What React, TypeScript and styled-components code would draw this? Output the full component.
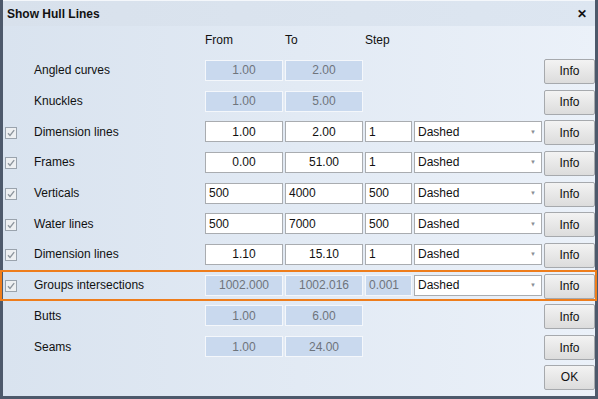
import * as React from 'react'
import styled, { createGlobalStyle } from 'styled-components'

type Align = 'left' | 'center'

interface LineRow {
    label: string
    checked?: boolean
    from: string
    to: string
    step?: string
    enabled?: boolean
    align?: Align
    style?: boolean
    highlighted?: boolean
}

const rows: LineRow[] = [
    { label: 'Angled curves', from: '1.00', to: '2.00', align: 'center' },
    { label: 'Knuckles', from: '1.00', to: '5.00', align: 'center' },
    { label: 'Dimension lines', checked: true, from: '1.00', to: '2.00', step: '1', enabled: true, align: 'center', style: true },
    { label: 'Frames', checked: true, from: '0.00', to: '51.00', step: '1', enabled: true, align: 'center', style: true },
    { label: 'Verticals', checked: true, from: '500', to: '4000', step: '500', enabled: true, align: 'left', style: true },
    { label: 'Water lines', checked: true, from: '500', to: '7000', step: '500', enabled: true, align: 'left', style: true },
    { label: 'Dimension lines', checked: true, from: '1.10', to: '15.10', step: '1', enabled: true, align: 'center', style: true },
    { label: 'Groups intersections', checked: true, from: '1002.000', to: '1002.016', step: '0.001', align: 'center', style: true, highlighted: true },
    { label: 'Butts', from: '1.00', to: '6.00', align: 'center' },
    { label: 'Seams', from: '1.00', to: '24.00', align: 'center' },
]

const CheckIcon = () => (
    <svg width="12" height="12" viewBox="0 0 12 12">
        <rect x="0.5" y="0.5" width="11" height="11" fill="#eef0f2" stroke="#9aa3ad" />
        <path d="M3 6.2 L5 8.5 L9.2 3.2" fill="none" stroke="#8c949c" strokeWidth="1.3" />
    </svg>
)

export default function App() {
    return (
        <>
            <GlobalStyle />
            <WindowStyled>
                <TitleBarStyled>
                    <TitleStyled>Show Hull Lines</TitleStyled>
                    <CloseStyled>✕</CloseStyled>
                </TitleBarStyled>
                <BodyStyled>
                    <HeaderRowStyled>
                        <span />
                        <span />
                        <HeaderCellStyled>From</HeaderCellStyled>
                        <HeaderCellStyled>To</HeaderCellStyled>
                        <HeaderCellStyled>Step</HeaderCellStyled>
                    </HeaderRowStyled>
                    {rows.map((r, i) => (
                        <RowStyled key={i} highlighted={r.highlighted}>
                            <CheckCellStyled>{r.checked && <CheckIcon />}</CheckCellStyled>
                            <LabelStyled>{r.label}</LabelStyled>
                            <FieldStyled enabled={r.enabled} align={r.align}>{r.from}</FieldStyled>
                            <FieldStyled enabled={r.enabled} align={r.align}>{r.to}</FieldStyled>
                            {r.step !== undefined ? (
                                <FieldStyled enabled={r.enabled} align="left">{r.step}</FieldStyled>
                            ) : (
                                <span />
                            )}
                            {r.style ? (
                                <SelectStyled>
                                    <span>Dashed</span>
                                    <ArrowStyled>▼</ArrowStyled>
                                </SelectStyled>
                            ) : (
                                <span />
                            )}
                            <ButtonStyled>Info</ButtonStyled>
                        </RowStyled>
                    ))}
                    <FooterStyled>
                        <ButtonStyled>OK</ButtonStyled>
                    </FooterStyled>
                </BodyStyled>
            </WindowStyled>
        </>
    )
}

const GlobalStyle = createGlobalStyle`
    html, body {
        margin: 0;
        padding: 0;
        background: #ffffff;
    }
    body {
        font-family: 'Liberation Sans', Arial, sans-serif;
        font-size: 12px;
        color: #111;
    }
`

const WindowStyled = styled.div`
    width: 598px;
    height: 399px;
    box-sizing: border-box;
    border: 3px solid #4d596b;
    border-top: none;
    display: flex;
    flex-direction: column;
    background: linear-gradient(to right, #d9e3ef, #ebf1f9);
`

const TitleBarStyled = styled.div`
    height: 26px;
    flex: none;
    display: flex;
    align-items: center;
    justify-content: space-between;
    padding: 0 8px 0 4px;
    border-top: 1px solid #f4f7fb;
    box-sizing: border-box;
    background: linear-gradient(to right, #d8e1ec, #dde6f1);
`

const TitleStyled = styled.div`
    font-weight: 700;
    font-size: 12px;
    color: #111;
`

const CloseStyled = styled.div`
    font-size: 12px;
    font-weight: 700;
    color: #111;
`

const BodyStyled = styled.div`
    flex: 1;
    display: flex;
    flex-direction: column;
`

const gridColumns = `
    display: grid;
    grid-template-columns: 29px 169px 78px 78px 47px 128px 51px;
    column-gap: 2px;
    align-items: center;
`

const HeaderRowStyled = styled.div`
    ${gridColumns}
    height: 29px;
`

const HeaderCellStyled = styled.div`
    padding-bottom: 1px;
`

const RowStyled = styled.div<{ highlighted?: boolean }>`
    ${gridColumns}
    height: 30.7px;
    position: relative;
    outline: ${(p) => (p.highlighted ? '2px solid #ee7d1c' : 'none')};
    outline-offset: -2px;
    margin: ${(p) => (p.highlighted ? '0 -2px 0 -3px' : '0')};
    padding-left: ${(p) => (p.highlighted ? '3px' : '0')};
`

const CheckCellStyled = styled.div`
    display: flex;
    align-items: center;
    padding-left: 2px;
    padding-top: 2px;
`

const LabelStyled = styled.div``

const FieldStyled = styled.div<{ enabled?: boolean; align?: Align }>`
    height: 21px;
    box-sizing: border-box;
    display: flex;
    align-items: center;
    justify-content: ${(p) => (p.align === 'center' ? 'center' : 'flex-start')};
    padding: 0 3px;
    background: ${(p) => (p.enabled ? '#ffffff' : '#c9d9ee')};
    border: 1px solid ${(p) => (p.enabled ? '#a9acb0' : '#f4f7fb')};
    color: ${(p) => (p.enabled ? '#111' : '#6e747c')};
`

const SelectStyled = styled.div`
    height: 21px;
    box-sizing: border-box;
    display: flex;
    align-items: center;
    justify-content: space-between;
    padding: 0 5px 0 3px;
    background: #ffffff;
    border: 1px solid #a9acb0;
    color: #111;
`

const ArrowStyled = styled.span`
    font-size: 6px;
    color: #8a8f96;
`

const ButtonStyled = styled.button`
    height: 25px;
    width: 51px;
    box-sizing: border-box;
    font-family: 'Liberation Sans', Arial, sans-serif;
    font-size: 12px;
    color: #111;
    border: 1px solid #a6a9ad;
    border-radius: 2px;
    background: linear-gradient(to bottom, #f3f3f3, #dcdcdc);
    padding: 0;
    margin-top: 2px;
`

const FooterStyled = styled.div`
    display: flex;
    justify-content: flex-end;
    padding-top: 1px;
`
